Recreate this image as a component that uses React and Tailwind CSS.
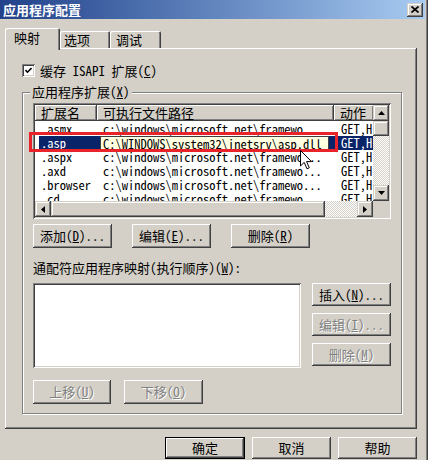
import React from "react";

const raised =
  "shadow-[inset_-1px_-1px_0_#404040,inset_1px_1px_0_#ffffff,inset_-2px_-2px_0_#808080]";
const sbRaised =
  "shadow-[inset_-1px_-1px_0_#404040,inset_1px_1px_0_#d4d0c8,inset_-2px_-2px_0_#808080,inset_2px_2px_0_#ffffff]";
const sunken =
  "shadow-[inset_1px_1px_0_#808080,inset_-1px_-1px_0_#ffffff,inset_2px_2px_0_#404040,inset_-2px_-2px_0_#d4d0c8]";
const dither =
  "bg-[image:repeating-conic-gradient(#ffffff_0%_25%,#d4d0c8_0%_50%)] bg-[length:2px_2px]";

function Btn({ children, className = "", disabled, def }) {
  return (
    <div
      className={`flex items-center justify-center bg-[#d4d0c8] ${
        def ? "border border-black" : ""
      } ${raised} ${
        disabled ? "text-[#808080] [text-shadow:1px_1px_0_#ffffff]" : "text-black"
      } ${className}`}
    >
      {children}
    </div>
  );
}

function Tri({ dir }) {
  const d =
    dir === "up"
      ? "M3.5 0 L7 4 L0 4 Z"
      : dir === "down"
      ? "M0 0 L7 0 L3.5 4 Z"
      : dir === "left"
      ? "M0 3.5 L4 0 L4 7 Z"
      : "M0 0 L4 3.5 L0 7 Z";
  const w = dir === "up" || dir === "down" ? 7 : 4;
  const h = dir === "up" || dir === "down" ? 4 : 7;
  return (
    <svg width={w} height={h} viewBox={`0 0 ${w} ${h}`}>
      <path d={d} fill="#000" />
    </svg>
  );
}

const rows = [
  [".asmx", "c:\\windows\\microsoft.net\\framewo...", "GET,H"],
  [".asp", "", "GET,H", true],
  [".aspx", "c:\\windows\\microsoft.net\\framewo...", "GET,H"],
  [".axd", "c:\\windows\\microsoft.net\\framewo...", "GET,H"],
  [".browser", "c:\\windows\\microsoft.net\\framewo...", "GET,H"],
  [".cd", "c:\\windows\\microsoft.net\\framewo...", "GET,H"],
];

export default function App() {
  return (
    <div
      className={`relative w-[428px] h-[460px] overflow-hidden bg-[#d4d0c8] text-black text-[13px] leading-[14px] font-['Noto_Sans_Mono_CJK_SC','Noto_Sans_CJK_SC',sans-serif] shadow-[inset_-1px_0_0_#404040,inset_-2px_0_0_#808080]`}
    >
      {/* title bar */}
      <div className="mr-[3px] h-[19px] flex items-center justify-between pl-[3px] pr-[2px] bg-linear-to-r from-[#22418a] to-[#a8cbf1]">
        <span className="text-white font-bold text-[13px]">应用程序配置</span>
        <div className={`w-[16px] h-[14px] bg-[#d4d0c8] flex items-center justify-center ${sbRaised}`}>
          <svg width="8" height="7" viewBox="0 0 8 7">
            <path d="M0.5 0.5 L7.5 6.5 M7.5 0.5 L0.5 6.5" stroke="#000" strokeWidth="1.7" />
          </svg>
        </div>
      </div>

      {/* tabs + panel */}
      <div className="ml-[5px] mt-[9px] w-[412px]">
        <div className="relative z-10 flex items-end h-[20px]">
          <div className="w-[55px] h-[22px] -mb-[2px] bg-[#d4d0c8] rounded-t-[2px] pl-[9px] pt-[3px] shadow-[inset_1px_1px_0_#ffffff,inset_-1px_0_0_#404040,inset_-2px_0_0_#808080]">
            映射
          </div>
          <div className="w-[50px] h-[17px] bg-[#d4d0c8] rounded-t-[2px] pl-[4px] pt-[2px] shadow-[inset_1px_1px_0_#ffffff,inset_-1px_0_0_#404040,inset_-2px_0_0_#808080]">
            选项
          </div>
          <div className="w-[51px] h-[17px] bg-[#d4d0c8] rounded-t-[2px] pl-[6px] pt-[2px] shadow-[inset_1px_1px_0_#ffffff,inset_-1px_0_0_#404040,inset_-2px_0_0_#808080]">
            调试
          </div>
        </div>

        <div className={`h-[381px] pt-[16px] pl-[17px] pr-[15px] ${raised}`}>
          {/* checkbox */}
          <div className="flex items-center h-[13px] gap-[5px]">
            <div className={`w-[13px] h-[13px] bg-white flex items-center justify-center ${sunken}`}>
              <svg width="7" height="7" viewBox="0 0 7 7">
                <path d="M0.5 3 L2.5 5.2 L6.5 1" stroke="#000" strokeWidth="1.6" fill="none" />
              </svg>
            </div>
            <span>
              缓存 ISAPI 扩展(<span className="underline">C</span>)
            </span>
          </div>

          {/* group box */}
          <div className="relative mt-[15px] h-[322px] border border-[#808080] shadow-[inset_1px_1px_0_#ffffff,1px_1px_0_#ffffff] pt-[10px] pl-[10px]">
            <span className="absolute -top-[8px] left-[7px] bg-[#d4d0c8] px-[2px]">
              应用程序扩展(<span className="underline">X</span>)
            </span>

            {/* list view */}
            <div className={`relative w-[358px] h-[116px] p-[2px] bg-white ${sunken}`}>
              <div className="grid grid-cols-[1fr_16px] grid-rows-[1fr_16px] h-full">
                <div className="overflow-hidden relative">
                  <div className="flex h-[16px] text-[13px] leading-[16px]">
                    <div className={`w-[62px] shrink-0 pl-[6px] bg-[#d4d0c8] ${raised}`}>扩展名</div>
                    <div className={`w-[237px] shrink-0 pl-[6px] bg-[#d4d0c8] ${raised}`}>可执行文件路径</div>
                    <div className={`w-[40px] shrink-0 pl-[6px] bg-[#d4d0c8] ${raised}`}>动作</div>
                  </div>
                  <div className="pt-[1px] text-[12.5px] leading-[14px]">
                    {rows.map(([n, p, a, sel]) => (
                      <div key={n} className="flex h-[14px] whitespace-nowrap">
                        {sel ? (
                          <>
                            <div className="w-[62px] shrink-0 pl-[4px]">
                              <div className="bg-[#0a246a] text-white pl-[2px] h-full">{n}</div>
                            </div>
                            <div className="w-[237px] shrink-0 bg-[#0a246a]" />
                            <div className="w-[40px] shrink-0 pl-[7px] bg-[#0a246a] text-white">{a}</div>
                          </>
                        ) : (
                          <>
                            <div className="w-[62px] shrink-0 pl-[6px]">{n}</div>
                            <div className="w-[237px] shrink-0 pl-[6px] overflow-hidden">{p}</div>
                            <div className="w-[40px] shrink-0 pl-[7px] overflow-hidden">{a}</div>
                          </>
                        )}
                      </div>
                    ))}
                  </div>
                  {/* info tip over selected row */}
                  <div className="absolute left-[65px] top-[31px] w-[229px] h-[15px] bg-[#ffffe1] border border-[#404040] pl-[2px] text-[12.5px] leading-[13px] whitespace-nowrap">
                    C:\WINDOWS\system32\inetsrv\asp.dll
                  </div>
                </div>
                {/* vertical scrollbar */}
                <div className="flex flex-col bg-[#d4d0c8]">
                  <div className={`h-[16px] flex items-center justify-center bg-[#d4d0c8] ${sbRaised}`}>
                    <Tri dir="up" />
                  </div>
                  <div className={`h-[15px] bg-[#d4d0c8] ${sbRaised}`} />
                  <div className={`flex-1 ${dither}`} />
                  <div className={`h-[16px] flex items-center justify-center bg-[#d4d0c8] ${sbRaised}`}>
                    <Tri dir="down" />
                  </div>
                </div>
                {/* horizontal scrollbar */}
                <div className="flex bg-[#d4d0c8]">
                  <div className={`w-[16px] flex items-center justify-center bg-[#d4d0c8] ${sbRaised}`}>
                    <Tri dir="left" />
                  </div>
                  <div className={`w-[274px] bg-[#d4d0c8] ${sbRaised}`} />
                  <div className={`flex-1 ${dither}`} />
                  <div className={`w-[16px] flex items-center justify-center bg-[#d4d0c8] ${sbRaised}`}>
                    <Tri dir="right" />
                  </div>
                </div>
                <div className="bg-[#d4d0c8]" />
              </div>
            </div>

            {/* buttons */}
            <div className="flex gap-[20px] mt-[5px]">
              <Btn className="w-[79px] h-[24px]">
                添加(<span className="underline">D</span>)...
              </Btn>
              <Btn className="w-[79px] h-[24px]">
                编辑(<span className="underline">E</span>)...
              </Btn>
              <Btn className="w-[79px] h-[24px]">
                删除(<span className="underline">R</span>)
              </Btn>
            </div>

            <div className="mt-[13px] h-[14px]">
              通配符应用程序映射(执行顺序)(<span className="underline">W</span>):
            </div>

            <div className="flex gap-[11px] mt-[8px]">
              <div className={`w-[268px] h-[85px] bg-white ${sunken}`} />
              <div className="flex flex-col gap-[7px]">
                <Btn className="w-[79px] h-[23px]">
                  插入(<span className="underline">N</span>)...
                </Btn>
                <Btn className="w-[79px] h-[23px]" disabled>
                  编辑(<span className="underline">I</span>)...
                </Btn>
                <Btn className="w-[79px] h-[23px]" disabled>
                  删除(<span className="underline">M</span>)
                </Btn>
              </div>
            </div>

            <div className="flex gap-[13px] mt-[12px]">
              <Btn className="w-[78px] h-[24px]" disabled>
                上移(<span className="underline">U</span>)
              </Btn>
              <Btn className="w-[79px] h-[24px]" disabled>
                下移(<span className="underline">O</span>)
              </Btn>
            </div>
          </div>
        </div>
      </div>

      {/* dialog buttons */}
      <div className="flex justify-end gap-[7px] mt-[8px] pr-[11px]">
        <Btn className="w-[80px] h-[22px]" def>
          确定
        </Btn>
        <Btn className="w-[79px] h-[22px]">取消</Btn>
        <Btn className="w-[79px] h-[22px]">帮助</Btn>
      </div>

      {/* annotation overlay */}
      <div className="absolute left-[29px] top-[132px] w-[309px] h-[20px] border-[3px] border-[#e8242a] pointer-events-none" />
      <svg className="absolute left-[300px] top-[150px]" width="13" height="20" viewBox="0 0 13 20">
        <path
          d="M0.5 0.5 L0.5 16 L4.2 12.4 L7 18.8 L9.3 17.8 L6.6 11.6 L11.5 11.6 Z"
          fill="#fff"
          stroke="#000"
          strokeWidth="1"
        />
      </svg>
    </div>
  );
}
